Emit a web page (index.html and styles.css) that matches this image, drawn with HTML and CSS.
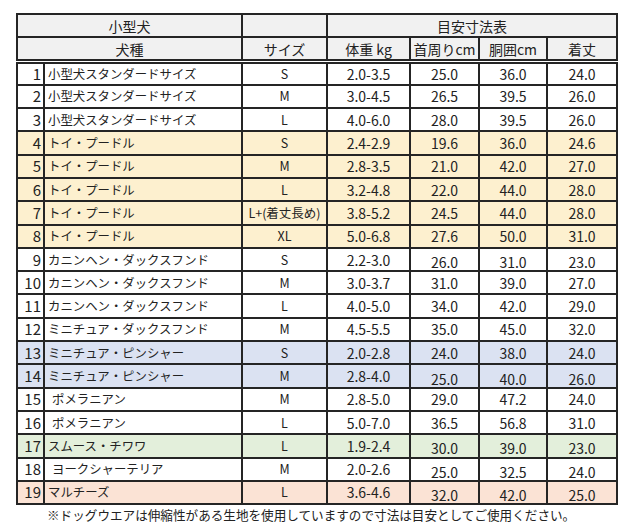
FILE: index.html
```html
<!DOCTYPE html>
<html lang="ja">
<head>
<meta charset="utf-8">
<link rel="stylesheet" href="styles.css">
</head>
<body>
<div class="page">
<table class="size-table">
  <colgroup>
    <col class="c-no"><col class="c-name"><col class="c-size"><col class="c-w"><col class="c-neck"><col class="c-chest"><col class="c-len">
  </colgroup>
  <thead>
    <tr class="h1"><th colspan="2">小型犬</th><th></th><th colspan="4">目安寸法表</th></tr>
    <tr class="h2"><th colspan="2">犬種</th><th>サイズ</th><th>体重 kg</th><th>首周りcm</th><th>胴囲cm</th><th>着丈</th></tr>
  </thead>
  <tbody>
    <tr><td class="no">1</td><td class="name">小型犬スタンダードサイズ</td><td class="sz">S</td><td>2.0-3.5</td><td>25.0</td><td>36.0</td><td>24.0</td></tr>
    <tr><td class="no">2</td><td class="name">小型犬スタンダードサイズ</td><td class="sz">M</td><td>3.0-4.5</td><td>26.5</td><td>39.5</td><td>26.0</td></tr>
    <tr><td class="no">3</td><td class="name">小型犬スタンダードサイズ</td><td class="sz">L</td><td>4.0-6.0</td><td>28.0</td><td>39.5</td><td>26.0</td></tr>
    <tr class="yellow"><td class="no">4</td><td class="name">トイ・プードル</td><td class="sz">S</td><td>2.4-2.9</td><td>19.6</td><td>36.0</td><td>24.6</td></tr>
    <tr class="yellow"><td class="no">5</td><td class="name">トイ・プードル</td><td class="sz">M</td><td>2.8-3.5</td><td>21.0</td><td>42.0</td><td>27.0</td></tr>
    <tr class="yellow"><td class="no">6</td><td class="name">トイ・プードル</td><td class="sz">L</td><td>3.2-4.8</td><td>22.0</td><td>44.0</td><td>28.0</td></tr>
    <tr class="yellow"><td class="no">7</td><td class="name">トイ・プードル</td><td class="sz">L+(着丈長め)</td><td>3.8-5.2</td><td>24.5</td><td>44.0</td><td>28.0</td></tr>
    <tr class="yellow"><td class="no">8</td><td class="name">トイ・プードル</td><td class="sz">XL</td><td>5.0-6.8</td><td>27.6</td><td>50.0</td><td>31.0</td></tr>
    <tr><td class="no">9</td><td class="name">カニンヘン・ダックスフンド</td><td class="sz">S</td><td>2.2-3.0</td><td class="lo">26.0</td><td class="lo">31.0</td><td class="lo">23.0</td></tr>
    <tr><td class="no">10</td><td class="name">カニンヘン・ダックスフンド</td><td class="sz">M</td><td>3.0-3.7</td><td>31.0</td><td>39.0</td><td>27.0</td></tr>
    <tr><td class="no">11</td><td class="name">カニンヘン・ダックスフンド</td><td class="sz">L</td><td>4.0-5.0</td><td>34.0</td><td>42.0</td><td>29.0</td></tr>
    <tr><td class="no">12</td><td class="name">ミニチュア・ダックスフンド</td><td class="sz">M</td><td>4.5-5.5</td><td>35.0</td><td>45.0</td><td>32.0</td></tr>
    <tr class="blue"><td class="no">13</td><td class="name">ミニチュア・ピンシャー</td><td class="sz">S</td><td>2.0-2.8</td><td>24.0</td><td>38.0</td><td>24.0</td></tr>
    <tr class="blue"><td class="no">14</td><td class="name">ミニチュア・ピンシャー</td><td class="sz">M</td><td>2.8-4.0</td><td class="lo">25.0</td><td class="lo">40.0</td><td class="lo">26.0</td></tr>
    <tr><td class="no">15</td><td class="name indent">ポメラニアン</td><td class="sz">M</td><td>2.8-5.0</td><td>29.0</td><td>47.2</td><td>24.0</td></tr>
    <tr><td class="no">16</td><td class="name indent">ポメラニアン</td><td class="sz">L</td><td>5.0-7.0</td><td>36.5</td><td>56.8</td><td>31.0</td></tr>
    <tr class="green"><td class="no">17</td><td class="name">スムース・チワワ</td><td class="sz">L</td><td>1.9-2.4</td><td class="lo">30.0</td><td class="lo">39.0</td><td class="lo">23.0</td></tr>
    <tr><td class="no">18</td><td class="name indent">ヨークシャーテリア</td><td class="sz">M</td><td>2.0-2.6</td><td class="lo">25.0</td><td class="lo">32.5</td><td class="lo">24.0</td></tr>
    <tr class="peach"><td class="no">19</td><td class="name">マルチーズ</td><td class="sz">L</td><td>3.6-4.6</td><td class="lo">32.0</td><td class="lo">42.0</td><td class="lo">25.0</td></tr>
  </tbody>
</table>
<p class="note">※ドッグウエアは伸縮性がある生地を使用していますので寸法は目安としてご使用ください。</p>
</div>
</body>
</html>
```

FILE: styles.css
```css
html, body {
  margin: 0;
  padding: 0;
  background: #ffffff;
}

body {
  font-family: "Noto Sans CJK JP", "Noto Sans", sans-serif;
  color: #222222;
}

.page {
  padding: 13px 0 0 16px;
}

.size-table {
  border-collapse: collapse;
  table-layout: fixed;
  width: 600px;
  font-size: 14px;
  line-height: 16px;
}

.c-no { width: 27px; }
.c-name { width: 198px; }
.c-size { width: 85px; }
.c-w { width: 83px; }
.c-neck { width: 69px; }
.c-chest { width: 68px; }
.c-len { width: 70px; }

.size-table th,
.size-table td {
  border: 2px solid #252525;
  padding: 0;
  text-align: center;
  vertical-align: middle;
  white-space: nowrap;
  overflow: hidden;
}

.size-table thead th {
  background: #f1f1f1;
  font-weight: normal;
  height: 21px;
}

.size-table thead tr.h2 th {
  border-bottom: 5px double #252525;
}

.size-table tbody tr {
  height: 23.3px;
}

.size-table td.no {
  text-align: right;
  padding-right: 2px;
  font-size: 15px;
}

.size-table td.name {
  text-align: left;
  padding-left: 3px;
  font-size: 12.4px;
}

.size-table td.name.indent {
  padding-left: 7px;
}

.size-table td.sz {
  font-size: 12.5px;
}

.size-table td.lo {
  padding-top: 5px;
}

tr.yellow td { background: #fdf0cf; }
tr.blue td { background: #dbe2f2; }
tr.green td { background: #e3efdb; }
tr.peach td { background: #fbe3d5; }

.note {
  margin: 1px 0 0 31px;
  font-size: 12.6px;
  line-height: 18px;
}
```
